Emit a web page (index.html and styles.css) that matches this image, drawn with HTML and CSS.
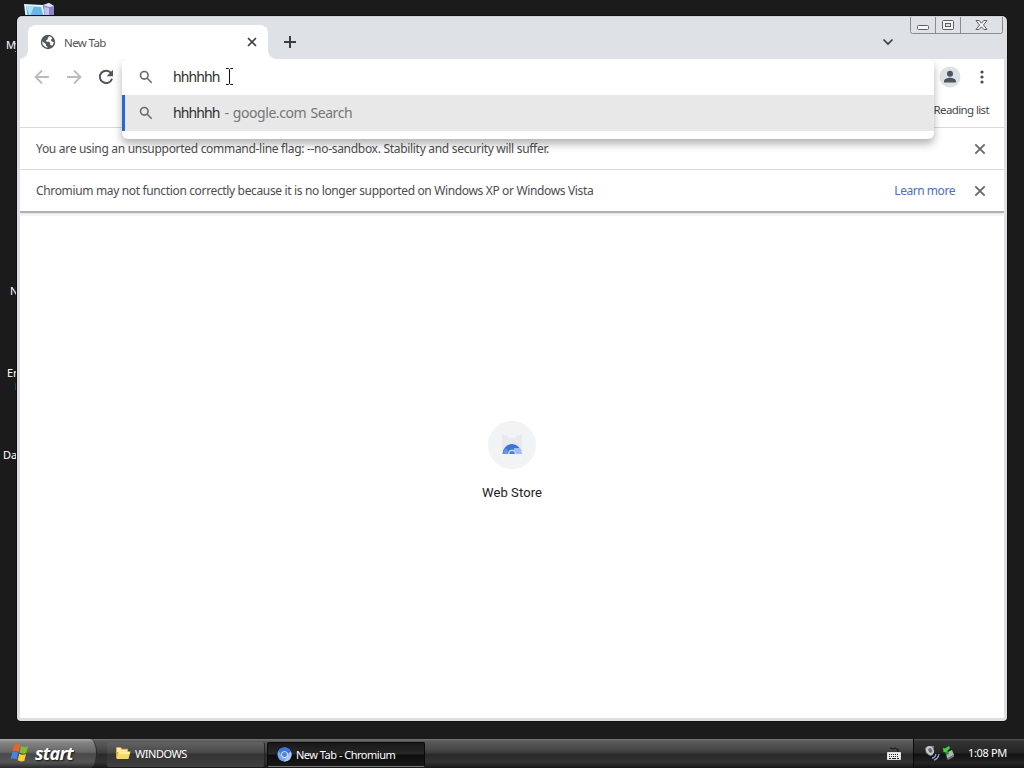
FILE: index.html
```html
<!DOCTYPE html>
<html lang="en">
<head>
    <meta charset="UTF-8">
    <meta name="viewport" content="width=device-width, initial-scale=1.0">
    <title>New Tab - Chromium</title>
    <link rel="stylesheet" href="styles.css">
</head>
<body>
    <div class="desktop">
        <!-- desktop icons, mostly behind the window -->
        <svg class="desk-icon computer" width="32" height="32" viewBox="0 0 32 32">
            <path d="M0 1l19 1 3 14-20 2z" fill="#e3f4fc"/>
            <path d="M2 3l15 1 3 11-16 1z" fill="#67b5e6"/>
            <path d="M2 3l8 .5-4 10z" fill="#a8e2f8"/>
            <path d="M19 2l6-2 5 3v13l-9 1z" fill="#8b86c8"/>
            <path d="M19 2l6-2 5 3-5 1z" fill="#e1e2fb"/>
            <path d="M20 4l5 1v10l-4-1z" fill="#c4c2ec"/>
        </svg>
        <span class="desk-label label-my">My</span>
        <span class="desk-label label-n">N</span>
        <span class="desk-label label-er">Er</span>
        <i class="desk-mark"></i>
        <span class="desk-label label-da">Da</span>

        <div class="window">
            <div class="tab-strip">
                <div class="tab">
                    <svg class="globe" width="16" height="16" viewBox="0 0 16 16">
                        <circle cx="8" cy="8" r="7.2" fill="#54585d"/>
                        <path d="M9.500 2.200L7.800 3.700v1.500L6.200 6.300v1.500h3l1 1.300v1.600l1.900 1.100A5.700 5.700 0 0 0 13.700 8l-1.900-.4-.9-1.600 1.400-1.800A5.800 5.800 0 0 0 9.500 2.200z" fill="#fff"/>
                        <path d="M2.300 7.200L6 10.300v1.400l1.400.8v1.300A5.800 5.800 0 0 1 2.300 7.200z" fill="#fff"/>
                    </svg>
                    <span class="tab-title">New Tab</span>
                    <svg class="tab-close" width="10" height="10" viewBox="0 0 10 10"><path d="M1 1l8 8M9 1l-8 8"/></svg>
                </div>
                <svg class="new-tab" width="14" height="14" viewBox="0 0 14 14"><path d="M7 1v12M1 7h12"/></svg>
                <svg class="tab-search" width="12" height="8" viewBox="0 0 12 8"><path d="M1.500 1.500L6 6l4.500-4.500"/></svg>
                <svg class="caption-buttons" width="94" height="19" viewBox="0 0 94 19">
                    <path d="M.5 0v14.500q0 2 2 2h88q2 0 2-2V0M25.500 0v16M50.500 0v16" fill="none" stroke="#898c91"/>
                    <rect x="7.500" y="8.500" width="11" height="4" rx="1" fill="#f4f4f4" stroke="#5e6063"/>
                    <rect x="32.500" y="3.500" width="11" height="9" rx="1" fill="#f4f4f4" stroke="#5e6063"/>
                    <rect x="35.500" y="6.500" width="5" height="3" fill="#dfe1e5" stroke="#5e6063"/>
                    <path d="M66 3.500h3.200l2.300 2.700 2.300-2.700H77l-3.500 4.500 3.500 4.500h-3.200l-2.300-2.700-2.300 2.700H66L69.500 8z" fill="#f4f4f4" stroke="#5e6063"/>
                </svg>
            </div>

            <div class="toolbar">
                <svg class="nav-icon off" width="16" height="16" viewBox="0 0 16 16"><path d="M15 8H2M8 1.500L1.500 8 8 14.500"/></svg>
                <svg class="nav-icon off" width="16" height="16" viewBox="0 0 16 16"><path d="M1 8h13M8 1.500L14.500 8 8 14.500"/></svg>
                <svg class="nav-icon" width="16" height="16" viewBox="0 0 16 16"><path d="M13.100 4.200A6.200 6.200 0 1 0 14 9.700"/><path d="M15 .8v6.400H8.600z" class="solid"/></svg>
                <div class="toolbar-end">
                    <svg width="22" height="22" viewBox="0 0 22 22">
                        <circle cx="11" cy="11" r="10.500" fill="#dde1e6"/>
                        <circle cx="11" cy="7.800" r="3" fill="#4b555f"/>
                        <path d="M5 16.500v-1.300c0-2.200 3.600-3.400 6-3.400s6 1.200 6 3.400v1.300z" fill="#4b555f"/>
                    </svg>
                    <svg width="4" height="14" viewBox="0 0 4 14"><g fill="#4a4c50"><circle cx="2" cy="2" r="1.600"/><circle cx="2" cy="7" r="1.600"/><circle cx="2" cy="12" r="1.600"/></g></svg>
                </div>
            </div>
            <div class="bookmarks"><span class="reading-list">Reading list</span></div>

            <div class="infobar">
                <span class="info-text first">You are using an unsupported command-line flag: --no-sandbox. Stability and security will suffer.</span>
                <svg class="info-close" width="12" height="12" viewBox="0 0 12 12"><path d="M1.300 1.300l9.400 9.400M10.700 1.300l-9.400 9.400"/></svg>
            </div>
            <div class="infobar last">
                <span class="info-text second">Chromium may not function correctly because it is no longer supported on Windows XP or Windows Vista</span>
                <span class="learn-more">Learn more</span>
                <svg class="info-close" width="12" height="12" viewBox="0 0 12 12"><path d="M1.300 1.300l9.400 9.400M10.700 1.300l-9.400 9.400"/></svg>
            </div>

            <div class="page">
                <div class="shortcut-icon">
                    <svg width="22" height="22" viewBox="0 0 22 22">
                        <path d="M1 1h20v18H1z" fill="#e8eaed"/>
                        <path d="M6 1h10l-2 3H8z" fill="#f3f5f5"/>
                        <path d="M1.500 20a9.500 10 0 0 1 19 0z" fill="#3d73d6"/>
                        <path d="M2 20a9 9 0 0 1 3-6l4 6z" fill="#6594e4"/>
                        <path d="M13 14h6a9 9 0 0 1 1.500 6H13z" fill="#9dbdf3"/>
                        <path d="M7 20a4 4.500 0 0 1 8 0z" fill="#c5d8f8"/>
                        <path d="M8.300 20a2.700 3 0 0 1 5.400 0z" fill="#4d80dc"/>
                    </svg>
                </div>
                <span class="shortcut-title">Web Store</span>
            </div>
        </div>

        <!-- omnibox dropdown over the toolbar -->
        <div class="omnibox">
            <div class="omni-row">
                <svg class="search-icon" width="14" height="14" viewBox="0 0 14 14"><circle cx="5.300" cy="5.300" r="3.800"/><path d="M8.200 8.200l4.500 4.500"/></svg>
                <span class="omni-text">hhhhhh</span>
            </div>
            <div class="omni-row selected">
                <svg class="search-icon" width="14" height="14" viewBox="0 0 14 14"><circle cx="5.300" cy="5.300" r="3.800"/><path d="M8.200 8.200l4.500 4.500"/></svg>
                <span class="omni-text">hhhhhh</span>
                <span class="omni-hint">- google.com Search</span>
            </div>
        </div>
        <svg class="cursor" width="9" height="17" viewBox="0 0 9 17"><path d="M1 .5h2.500l1 1 1-1H8M4.500 1.500v14M1 16.500h2.500l1-1 1 1H8"/></svg>

        <div class="taskbar">
            <div class="start">
                <svg width="20" height="20" viewBox="0 0 20 20">
                    <path d="M4 2q3-2 6 .3L8.500 9q-3-2-6-.5z" fill="#e8642c"/>
                    <path d="M11 3q3 2 7 .3L16.300 10q-3.500 1.500-6.800-.4z" fill="#79bd35"/>
                    <path d="M2.200 9.500q3-1.500 6 .5L6.600 16.600q-3-2-6-.3z" fill="#4783dc"/>
                    <path d="M9.200 10.700q3.200 2 6.800.4L14.400 17.800q-3.500 1.500-6.700-.5z" fill="#f8cf35"/>
                </svg>
                <span class="start-text">start</span>
            </div>
            <div class="task">
                <svg width="16" height="14" viewBox="0 0 16 14">
                    <path d="M1 12V2q0-1 1-1h3.500L7 2.700h6V12z" fill="#d9ad32"/>
                    <path d="M2 2h3.300l1.500 1.700H12V6H2z" fill="#fff1a8"/>
                    <path d="M3.500 5.500H15.500L13.500 13H1.500z" fill="#f6da67"/>
                    <path d="M4 6h11l-.5 2h-11z" fill="#fff0a0"/>
                </svg>
                <span class="task-folder">WINDOWS</span>
            </div>
            <div class="task active">
                <svg width="15" height="15" viewBox="0 0 16 16">
                    <circle cx="8" cy="8" r="7.500" fill="#76a9f3"/>
                    <path d="M8 8V.5A7.500 7.500 0 0 1 14.700 5z" fill="#2f6bcf"/>
                    <path d="M1.600 4A7.500 7.500 0 0 1 14.700 4.700H8L5 9z" fill="#3c78dc"/>
                    <path d="M14.700 4.700A7.500 7.500 0 0 1 7.500 15.500L11 10z" fill="#abcaf8"/>
                    <circle cx="8" cy="8" r="3.600" fill="#e8f0fd"/>
                    <circle cx="8" cy="8" r="2.700" fill="#4c84df"/>
                </svg>
                <span class="task-chromium">New Tab - Chromium</span>
            </div>
            <svg class="keyboard" width="14" height="13" viewBox="0 0 14 13">
                <path d="M3 1.500q1.500-1 2 0t2 0 2 0 2 .5v3" fill="none" stroke="#111"/>
                <path d="M.5 5.500h13v7H.5z" fill="#eee" stroke="#ddd"/>
                <path d="M2 7.500h10M2 9.500h10" stroke="#222" stroke-dasharray="1 1"/><path d="M2 11.500h2M5 11.500h4M10 11.500h2" stroke="#222"/>
            </svg>
            <div class="tray">
                <svg width="16" height="16" viewBox="0 0 16 16">
                    <path d="M1 3l3-2 6 0-1 9-3 1-4-3z" fill="#85878a"/>
                    <ellipse cx="6" cy="5.500" rx="3.600" ry="4.500" transform="rotate(-35 6 5.500)" fill="#c6c8cb"/>
                    <ellipse cx="6.300" cy="5.500" rx="1.800" ry="2.500" transform="rotate(-35 6.300 5.500)" fill="#696b70"/>
                    <path d="M8 13q3 0 4-4M10 15q4-1 5-6" fill="none" stroke="#8d9bd8" stroke-width="1.300"/>
                </svg>
                <svg class="eject" width="14" height="15" viewBox="0 0 14 15">
                    <path d="M4 8l6-3 2 5-7 3.500z" fill="#aeb5b1"/>
                    <path d="M5 13.500l7-3.500v1.800L6 15z" fill="#73797b"/>
                    <path d="M1 3l2 .5L7 1l1 2-3 3 1 2-4.500-1z" fill="#42d936"/>
                    <path d="M3 7l3-1 1 3-3 1z" fill="#239c25"/>
                </svg>
                <span class="clock">1:08 PM</span>
            </div>
        </div>
    </div>
</body>
</html>
```
FILE: styles.css
```css
* {
    margin: 0;
    padding: 0;
    box-sizing: border-box;
}

body {
    font-family: Tahoma, "Noto Sans", "Open Sans", sans-serif;
    font-size: 12px;
    background: #1b1b1b;
    overflow: hidden;
}

svg {
    display: block;
    flex-shrink: 0;
}

span {
    white-space: nowrap;
}

.desktop {
    position: relative;
    width: 1024px;
    height: 768px;
    background: #1b1b1b;
    overflow: hidden;
}

.desk-icon {
    position: absolute;
    left: 24px;
    top: 3px;
}

.desk-label {
    position: absolute;
    color: #fff;
    font-size: 11px;
    line-height: 14px;
}

.label-my { left: 6px; top: 38px; letter-spacing: -0.8px; }
.label-n { left: 10px; top: 284px; }
.label-er { left: 7px; top: 366px; }
.label-da { left: 3px; top: 448px; }

.desk-mark {
    position: absolute;
    left: 15px;
    top: 383px;
    width: 1px;
    height: 7px;
    background: #24406e;
}

/* browser window */
.window {
    position: absolute;
    left: 17px;
    top: 16px;
    width: 990px;
    height: 705px;
    display: flex;
    flex-direction: column;
    background: #fff;
    border: 3px solid #dedfe2;
    border-top: 1px solid #cfd1d4;
    border-radius: 5px 5px 4px 4px;
    box-shadow: 0 0 0 1px #111;
}

.tab-strip {
    display: flex;
    height: 42px;
    background: #dee1e6;
}

.tab {
    position: relative;
    display: flex;
    align-items: center;
    width: 240px;
    height: 34px;
    margin: 8px 0 0 8px;
    padding: 0 11px 0 12px;
    background: #fff;
    border-radius: 8px 8px 0 0;
}

/* curved feet of the active tab */
.tab::before,
.tab::after {
    content: "";
    position: absolute;
    bottom: 0;
    width: 8px;
    height: 8px;
}

.tab::before {
    left: -8px;
    background: radial-gradient(circle at 0 0, #dee1e6 7.5px, #fff 8px);
}

.tab::after {
    right: -8px;
    background: radial-gradient(circle at 100% 0, #dee1e6 7.5px, #fff 8px);
}

.tab-title {
    margin-left: 8px;
    color: #505357;
    font-size: 11.5px;
    letter-spacing: -0.6px;
}

.tab-close {
    margin-left: auto;
}

.tab-close path,
.new-tab path,
.tab-search path {
    fill: none;
    stroke: #3a3d41;
    stroke-width: 1.7;
}

.new-tab {
    margin: 18px 0 0 15px;
}

.new-tab path {
    stroke-width: 2;
}

.tab-search {
    margin: 21px 16px 0 auto;
}

.toolbar {
    display: flex;
    align-items: center;
    gap: 16px;
    height: 36px;
    padding: 0 17px 0 14px;
}

.nav-icon path {
    fill: none;
    stroke: #515458;
    stroke-width: 2;
}

.nav-icon .solid {
    fill: #515458;
    stroke: none;
}

.nav-icon.off path {
    stroke: #bbbcbe;
    stroke-width: 1.8;
}

.toolbar-end {
    display: flex;
    align-items: center;
    gap: 19px;
    margin-left: auto;
    margin-right: 3px;
}

.bookmarks {
    display: flex;
    justify-content: flex-end;
    height: 33px;
    padding: 6px 15px 0 0;
    border-bottom: 1px solid #d8d9db;
}

.reading-list {
    color: #46484b;
    font-size: 11.5px;
    line-height: 17px;
    letter-spacing: -0.62px;
}

.infobar {
    display: flex;
    align-items: center;
    height: 42px;
    padding: 0 18px 0 16px;
    border-bottom: 1px solid #d8d9db;
}

.infobar.last {
    border-bottom: 2px solid #afb0b2;
    height: 43px;
    box-shadow: 0 2px 2px #e8e8e8;
}

.info-text {
    color: #4b4d50;
}

.first { letter-spacing: -0.3px; }
.second { letter-spacing: -0.35px; }

.learn-more {
    margin-left: auto;
    color: #4c6fb8;
    letter-spacing: -0.46px;
}

.info-close {
    margin-left: auto;
}

.learn-more + .info-close {
    margin-left: 19px;
}

.info-close path {
    stroke: #66686b;
    stroke-width: 1.8;
}

.page {
    flex: 1;
    display: flex;
    flex-direction: column;
    align-items: center;
    padding-top: 208px;
}

.shortcut-icon {
    display: flex;
    align-items: center;
    justify-content: center;
    width: 48px;
    height: 48px;
    border-radius: 50%;
    background: #f1f3f4;
}

.shortcut-title {
    margin-top: 15px;
    font: 13px/18px Roboto, sans-serif;
    letter-spacing: 0.1px;
    color: #202124;
}

/* omnibox */
.omnibox {
    position: absolute;
    left: 122px;
    top: 59px;
    width: 812px;
    height: 80px;
    background: #fff;
    border-radius: 6px;
    box-shadow: 0 5px 9px rgba(0, 0, 0, 0.3);
    clip-path: inset(0 -16px -20px -16px);
}

.omni-row {
    display: flex;
    align-items: center;
    height: 36px;
    padding: 0 0 1px 17px;
    font-size: 14px;
}

.omni-row.selected {
    padding-left: 14px;
    border-left: 3px solid #2a68cb;
    background: #e8e8e8;
}

.search-icon {
    margin-top: 1px;
    fill: none;
    stroke: #68696b;
    stroke-width: 1.6;
}

.omni-text {
    margin-left: 20px;
    color: #2e2e2e;
    letter-spacing: -0.92px;
}

.omni-hint {
    margin-left: 5px;
    color: #757678;
    letter-spacing: -0.42px;
    word-spacing: 1px;
}

.cursor {
    position: absolute;
    left: 225px;
    top: 68px;
    fill: none;
    stroke: #111;
}

/* taskbar */
.taskbar {
    position: absolute;
    left: 0;
    bottom: 0;
    display: flex;
    width: 1024px;
    height: 29px;
    color: #fff;
    font-size: 11px;
    background: linear-gradient(#777 0, #5b5b5b 2px, #4b4b4b 9px, #3b3b3b 14px, #292929 15px, #333 23px, #171717 29px);
}

.start {
    display: flex;
    align-items: center;
    width: 97px;
    padding: 0 0 2px 10px;
    background: linear-gradient(#aaa 0, #858585 3px, #666 13px, #48484a 15px, #565656 23px, #292929 29px);
    border-right: 1px solid #292929;
    border-radius: 0 7px 7px 0 / 0 14px 14px 0;
}

.start-text {
    margin-left: 5px;
    font: italic bold 18px/20px "Open Sans", sans-serif;
    letter-spacing: -0.7px;
    text-shadow: 1px 1px 2px #111;
}

.task {
    display: flex;
    align-items: center;
    width: 158px;
    height: 25px;
    margin: 3px 0 0 10px;
    padding: 0 0 3px 8px;
    background: linear-gradient(#626262, #484848 11px, #333 12px, #404040);
    border-right: 1px solid #252525;
    border-radius: 2px;
}

.task.active {
    margin-left: 2px;
    padding: 0 0 1px 9px;
    background: linear-gradient(#181818, #282828 11px, #0d0d0d 12px, #181818);
    border: 1px solid #090909;
    border-bottom-color: #777;
}

.task-folder {
    margin-left: 4px;
    letter-spacing: -0.45px;
}

.task-chromium {
    margin-left: 4px;
    letter-spacing: -0.5px;
}

.keyboard {
    margin: 8px 12px 0 auto;
}

.tray {
    display: flex;
    align-items: center;
    width: 111px;
    padding: 0 0 2px 10px;
    background: linear-gradient(#555 0, #333 2px, #252525 14px, #111 15px, #242424 24px, #111 29px);
    border-left: 1px solid #080808;
}

.eject {
    margin-left: 2px;
}

.clock {
    margin-left: 12px;
    letter-spacing: -0.35px;
}
```
